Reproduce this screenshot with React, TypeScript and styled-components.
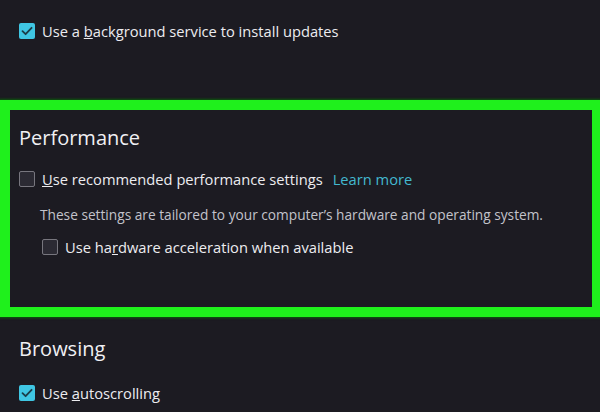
import React from "react";
import styled, {createGlobalStyle} from "styled-components";

const GlobalStyle = createGlobalStyle`
  html, body {
    margin: 0;
    padding: 0;
    background: #1c1b22;
  }
  body {
    font-family: "Open Sans", "Noto Sans", sans-serif;
    color: #ececf0;
  }
`

const Page = styled.div`
  width: 600px;
  height: 412px;
  overflow: hidden;
  background: #1c1b22;
`

const TopBlock = styled.div`
  padding: 23px 0 0 19px;
  height: 100px;
  box-sizing: border-box;
`

const Highlight = styled.section`
  height: 217px;
  box-sizing: border-box;
  border: 10px solid #1ff01c;
  border-right-width: 8px;
  padding: 13px 0 0 9px;
  box-shadow: 0 0 2px 1px #0b5c0b;
`

const Plain = styled.section`
  padding: 17px 0 0 19px;
`

const Heading = styled.h2`
  margin: 0;
  font-size: 20px;
  font-weight: 400;
  line-height: 30px;
  color: #f0f0f4;
`

const Row = styled.label<{indent?: boolean; top?: number}>`
  display: flex;
  align-items: center;
  gap: 7px;
  margin-left: ${p => p.indent ? 23 : 0}px;
  margin-top: ${p => p.top ?? 0}px;
  font-size: 14.7px;
  line-height: 16px;
  color: #ececf0;
`

const Box = styled.span<{checked?: boolean}>`
  flex: none;
  width: 16px;
  height: 16px;
  box-sizing: border-box;
  border-radius: 2px;
  display: flex;
  align-items: center;
  justify-content: center;
  background: ${p => p.checked ? "#3fc6e3" : "#2b2a33"};
  border: ${p => p.checked ? "none" : "1.5px solid #77767e"};
`

const LearnMore = styled.a`
  margin-left: 3px;
  color: #43b8cf;
  text-decoration: none;
`

const Description = styled.p`
  margin: 19px 0 0 21px;
  font-size: 13.7px;
  line-height: 18px;
  color: #c3c3cb;
`

const Check = ({checked}: {checked?: boolean}) => (
  <Box checked={checked}>
    {checked && (
      <svg width="12" height="12" viewBox="0 0 12 12">
        <path d="M1.5 6.2 L4.6 9.2 L10.6 2.8" fill="none" stroke="#1b3d48" strokeWidth="1.8" strokeLinecap="round" strokeLinejoin="round"/>
      </svg>
    )}
  </Box>
)

export default function App() {
  return (
    <Page>
      <GlobalStyle/>
      <TopBlock>
        <Row><Check checked/><span>Use a <u>b</u>ackground service to install updates</span></Row>
      </TopBlock>
      <Highlight>
        <Heading>Performance</Heading>
        <Row top={18}>
          <Check/>
          <span><u>U</u>se recommended performance settings</span>
          <LearnMore>Learn more</LearnMore>
        </Row>
        <Description>These settings are tailored to your computer’s hardware and operating system.</Description>
        <Row indent top={15}><Check/><span>Use ha<u>r</u>dware acceleration when available</span></Row>
      </Highlight>
      <Plain>
        <Heading>Browsing</Heading>
        <Row top={21}><Check checked/><span>Use <u>a</u>utoscrolling</span></Row>
      </Plain>
    </Page>
  )
}
